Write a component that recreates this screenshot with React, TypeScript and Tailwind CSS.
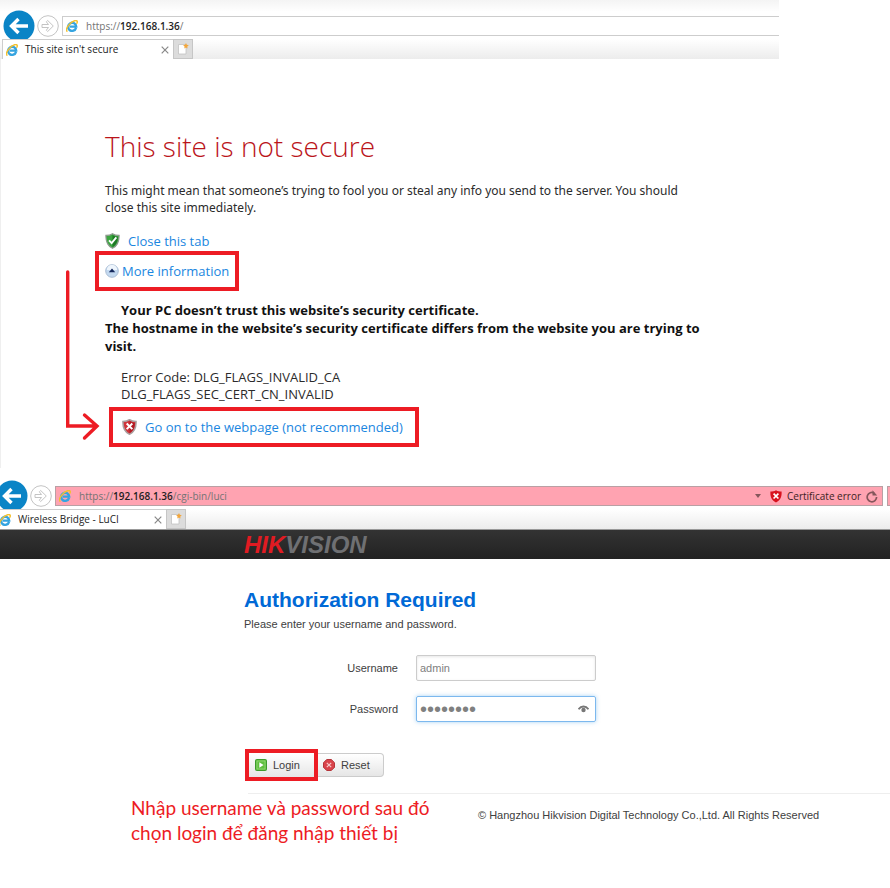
import type { FC, ReactNode } from "react";

interface BrowserBarProps {
  host: string;
  path: string;
  title: string;
  shifted?: boolean;
  insecure?: boolean;
}

const IeIcon: FC = () => (
  <svg viewBox="0 0 16 16" className="size-3 shrink-0" aria-hidden="true">
    <path
      d="M13.4 10.6A5.4 5.4 0 1 1 13.6 8.8H5"
      fill="none"
      stroke="#35a4e0"
      strokeWidth="3.2"
    />
    <path
      d="M1.2 14.8C-1.4 12 5.6 2.6 11.5 1c3.2-.8 4.2.8 3 3.4"
      fill="none"
      stroke="#f3c02f"
      strokeWidth="2"
      strokeLinecap="round"
    />
  </svg>
);

const BackIcon: FC = () => (
  <svg viewBox="0 0 32 32" className="size-8" aria-hidden="true">
    <circle cx="16" cy="16" r="15.5" fill="#0a84c6" />
    <path
      d="M25 16H9M15.5 9 8.5 16l7 7"
      fill="none"
      stroke="#fff"
      strokeWidth="3.4"
    />
  </svg>
);

const ForwardIcon: FC = () => (
  <svg viewBox="0 0 22 22" className="size-[22px]" aria-hidden="true">
    <circle cx="11" cy="11" r="10.3" fill="#fff" stroke="#c4c4c4" />
    <path
      d="M5 9.5h6.5L9.3 6.8l1.4-1.3 5.6 5.5-5.6 5.5-1.4-1.3 2.2-2.7H5z"
      fill="#fff"
      stroke="#bdbdbd"
      strokeWidth="0.9"
    />
  </svg>
);

const NewTabIcon: FC = () => (
  <svg viewBox="0 0 12 12" className="size-3" aria-hidden="true">
    <path d="M1.5 1.5H9V11H1.5z" fill="#fff" stroke="#c2c2c2" strokeWidth="0.8" />
    <path d="m9 0 .8 1.8 2 .5-1.5 1.200.2 2L9 4.400l-1.800 1 .4-2-1.500-1.200 2-.4z" fill="#f3a63a" />
  </svg>
);

const CloseIcon: FC = () => (
  <svg viewBox="0 0 8 8" className="size-2" aria-hidden="true">
    <path d="m.7.7 6.6 6.6M7.3.7.7 7.3" stroke="#888" strokeWidth="1.2" />
  </svg>
);

const SafeShield: FC = () => (
  <svg viewBox="0 0 16 17" className="h-4 w-[15px]" aria-hidden="true">
    <path
      d="M8 .7c2 1.4 4.4 1.9 7 1.9.2 6.5-1.5 11-7 13.7C2.500 13.600.8 9.100 1 2.600c2.600 0 5-.5 7-1.900z"
      fill="#3aa63f"
      stroke="#8f9a90"
      strokeWidth="1.3"
    />
    <path d="M8 2v13c4-2.200 5.500-5.500 5.600-11C11.500 3.900 9.600 3.200 8 2z" fill="#1d7a25" />
    <path d="m4.300 7.800 2.800 3 5-6.200" fill="none" stroke="#fff" strokeWidth="2" />
  </svg>
);

const DangerShield: FC = () => (
  <svg viewBox="0 0 16 17" className="h-4 w-[15px]" aria-hidden="true">
    <path
      d="M8 .7c2 1.4 4.4 1.9 7 1.9.2 6.5-1.5 11-7 13.7C2.500 13.600.8 9.100 1 2.600c2.600 0 5-.5 7-1.900z"
      fill="#d0343a"
      stroke="#a9a0a0"
      strokeWidth="1.6"
    />
    <path d="M8 2v13c4-2.200 5.500-5.500 5.600-11C11.500 3.900 9.600 3.200 8 2z" fill="#b01c24" />
    <path d="m5 4.800 6 6M11 4.800l-6 6" stroke="#fff" strokeWidth="2.1" />
  </svg>
);

const ErrorShield: FC = () => (
  <svg viewBox="0 0 12 13" className="h-[13px] w-3" aria-hidden="true">
    <path
      d="M6 .3c1.600 1 3.500 1.300 5.600 1.300.3 5-.9 8.700-5.600 11C1.300 10.300.1 6.600.4 1.600 2.500 1.600 4.400 1.300 6 .3z"
      fill="#d8121e"
    />
    <path d="m3.600 3.700 4.800 4.800M8.400 3.700 3.600 8.500" stroke="#fff" strokeWidth="1.7" />
  </svg>
);

const CollapseIcon: FC = () => (
  <svg viewBox="0 0 14 14" className="size-[14px]" aria-hidden="true">
    <circle cx="7" cy="7" r="6.3" fill="#c3d9f0" stroke="#a9bdd4" />
    <path d="M1.800 6a5.200 5.200 0 0 1 10.400 0z" fill="#eef5fc" />
    <path d="M3.800 8.200 7 4.600l3.200 3.600z" fill="#14285c" />
  </svg>
);

const RefreshIcon: FC = () => (
  <svg viewBox="0 0 12 13" className="h-[13px] w-3" aria-hidden="true">
    <path d="M8.200 3A4.700 4.700 0 1 0 10.600 7" fill="none" stroke="#85565b" strokeWidth="1.7" />
    <path d="M6.500.2v5.300h4.700z" fill="#85565b" />
  </svg>
);

const BrowserBar: FC<BrowserBarProps> = ({ host, path, title, shifted, insecure }) => (
  <div className={`font-["Open_Sans",sans-serif] text-[10px] ${shifted ? "-ml-[7px]" : ""}`}>
    {/* Address row */}
    <div className="flex h-5 items-center">
      <button type="button" aria-label="Back" className="ml-[3px] size-8 shrink-0">
        <BackIcon />
      </button>
      <button type="button" aria-label="Forward" className="mx-[2px] size-[22px] shrink-0">
        <ForwardIcon />
      </button>
      <div
        className={`ml-px flex h-full flex-1 items-center border pl-[3px] ${
          insecure ? "border-[#b9a0a4] bg-[#ffa3b1]" : "border-r-0 border-[#cdcdcd] bg-white"
        }`}
      >
        <IeIcon />
        <span className="ml-2 flex-1 text-[#747474]">
          https://<span className="font-semibold text-[#1e1e1e]">{host}</span>
          {path}
        </span>
        {insecure && (
          <div className="flex items-center pr-1 text-[#3d1f23]">
            <svg viewBox="0 0 6 4" className="mr-[9px] h-1 w-[6px]" aria-hidden="true">
              <path d="M0 0h6L3 4z" fill="#85565b" />
            </svg>
            <ErrorShield />
            <span className="mx-[5px]">Certificate error</span>
            <RefreshIcon />
          </div>
        )}
      </div>
      {insecure && <div className="ml-1 h-full w-[3px] border border-r-0 border-[#b9a0a4] bg-[#ffa3b1]" />}
    </div>
    {/* Tab row */}
    <div className="relative mt-[3px] flex h-5 bg-linear-to-b from-white to-[#ececec]">
      <div className="ml-[2px] flex w-[171px] items-center border-t border-l border-[#cdcdcd] bg-white pr-1 pl-[3px]">
        <IeIcon />
        <span className="ml-[7px] flex-1 text-[#222]">{title}</span>
        <button type="button" aria-label="Close tab">
          <CloseIcon />
        </button>
      </div>
      <button
        type="button"
        aria-label="New tab"
        className="grid w-5 place-items-center border border-[#c6c6c6] bg-[#dcdcdc]"
      >
        <NewTabIcon />
      </button>
    </div>
  </div>
);

const Highlight: FC<{ className: string; children: ReactNode }> = ({ className, children }) => (
  <div className={`flex w-fit items-center border-4 border-[#ed1c24] ${className}`}>{children}</div>
);

const WarningPage: FC = () => (
  <section className="relative w-7/8 border-l border-[#efefef] pb-[21px]">
    <div className="-ml-px bg-linear-to-b from-[#f4f4f4] to-white to-20% pt-4">
      <BrowserBar host="192.168.1.36" path="/" title="This site isn't secure" />
    </div>
    <div className='pr-[72px] pl-[104px] font-["Open_Sans",sans-serif] text-[13px] leading-[17px] text-[#2b2b2b]'>
      <h1 className="mt-[67px] text-[28px] leading-10 font-light text-[#ba141a]">
        This site is not secure
      </h1>
      <p className='mt-4 font-["Noto_Sans",sans-serif] text-[12px]'>
        This might mean that someone’s trying to fool you or steal any info you send to the server. You should
        close this site immediately.
      </p>
      <a href="#" className="mt-[15px] flex h-5 w-fit items-center text-[#1a86e0]">
        <SafeShield />
        <span className="ml-2">Close this tab</span>
      </a>
      <Highlight className="-ml-[10px] h-10 px-[6px]">
        <a href="#" className="flex items-center text-[#1a86e0]">
          <CollapseIcon />
          <span className="ml-[3px]">More information</span>
        </a>
      </Highlight>
      <p className="mt-[10px] indent-4 leading-[18px] font-bold text-[#111]">
        Your PC doesn’t trust this website’s security certificate.
      </p>
      <p className="leading-[18px] font-bold text-[#111]">
        The hostname in the website’s security certificate differs from the website you are trying to visit.
      </p>
      <p className="mt-[14px] pl-4">
        Error Code: DLG_FLAGS_INVALID_CA
        <br />
        DLG_FLAGS_SEC_CERT_CN_INVALID
      </p>
      <Highlight className="mt-1 ml-1 h-10 pr-3 pl-[9px]">
        <a href="#" className="flex items-center text-[#1a86e0]">
          <DangerShield />
          <span className="ml-2">Go on to the webpage (not recommended)</span>
        </a>
      </Highlight>
    </div>
    {/* Arrow from the first step to the second */}
    <svg
      viewBox="0 0 36 172"
      className="absolute top-[269px] left-[63px] h-[172px] w-9"
      fill="none"
      stroke="#ed1c24"
      strokeWidth="3.4"
      strokeLinecap="round"
      aria-hidden="true"
    >
      <path d="M3.700 3v154H32M20.500 146l12.500 11-12.500 12" />
    </svg>
  </section>
);

const LoginPage: FC = () => (
  <section className='overflow-hidden pt-[18px] font-["Liberation_Sans",sans-serif] text-[11px] text-[#404040]'>
    <BrowserBar
      host="192.168.1.36"
      path="/cgi-bin/luci"
      title="Wireless Bridge - LuCI"
      shifted
      insecure
    />
    <header className="flex h-[30px] items-center border-t border-[#999] bg-linear-to-b from-[#333] to-[#222] pl-[244px] text-[24px] font-bold italic">
      <span className="text-[#e01b22]">HIK</span>
      <span className="text-[#6f7073]">VISION</span>
    </header>
    <form onSubmit={(e) => e.preventDefault()}>
      <div className="pl-[244px]">
        <h2 className="mt-[29px] text-[21px] leading-6 font-bold text-[#0069d6]">Authorization Required</h2>
        <p className="mt-1 leading-4">Please enter your username and password.</p>
      </div>
      <div className="mt-[23px] flex items-center pl-[244px]">
        <label htmlFor="username" className="w-[154px] text-right">
          Username
        </label>
        <input
          id="username"
          type="text"
          defaultValue="admin"
          className="ml-[18px] h-[26px] w-[180px] rounded-xs border border-[#ccc] px-[3px] text-[#808080] shadow-[inset_0_1px_3px_rgba(0,0,0,0.1)]"
        />
      </div>
      <div className="mt-[15px] flex items-center pl-[244px]">
        <label htmlFor="password" className="w-[154px] text-right">
          Password
        </label>
        <div className="relative ml-[18px]">
          <input
            id="password"
            type="password"
            defaultValue="password"
            className="block h-[26px] w-[180px] rounded-xs border border-[#7cb8ee] pr-6 pl-[3px] text-[20px] text-[#808080] shadow-[0_0_4px_rgba(82,168,236,0.5)]"
          />
          <button type="button" aria-label="Show password" className="absolute top-[9px] right-[7px]">
            <svg viewBox="0 0 11 8" className="h-2 w-[11px]" aria-hidden="true">
              <path d="M.6 4.300C3 .7 8 .7 10.400 4.300" fill="none" stroke="#777" strokeWidth="2" />
              <circle cx="5.5" cy="5" r="2.2" fill="#777" />
            </svg>
          </button>
        </div>
      </div>
      <div className="mt-[27px] flex items-center pl-[245px]">
        <Highlight className="h-8">
          <button
            type="submit"
            className="flex h-6 w-[65px] items-center bg-linear-to-b from-white to-[#e6e6e6] pl-[6px]"
          >
            <svg viewBox="0 0 12 12" className="mr-[6px] size-3" aria-hidden="true">
              <rect x=".5" y=".5" width="11" height="11" rx="1" fill="#5fbf3f" stroke="#3c9a2c" />
              <path d="M2 2h8v8H2z" fill="none" stroke="#a8e08e" strokeWidth="0.6" />
              <path d="M4.300 3.200v5.600L8.600 6z" fill="#fff" />
            </svg>
            Login
          </button>
        </Highlight>
        <button
          type="reset"
          className="flex h-6 w-[66px] items-center rounded-r-sm border border-l-0 border-[#ccc] bg-linear-to-b from-white to-[#e6e6e6] pl-[5px]"
        >
          <svg viewBox="0 0 12 12" className="mr-[6px] size-3" aria-hidden="true">
            <path d="M3.700.5h4.600l3.200 3.200v4.600l-3.200 3.200H3.700L.5 8.300V3.700z" fill="#d9444b" stroke="#b5353b" />
            <path d="m3.800 3.800 4.400 4.400M8.200 3.800 3.800 8.200" stroke="#f6c9cb" strokeWidth="1.2" />
          </svg>
          Reset
        </button>
      </div>
    </form>
    <footer className="mt-3">
      <hr className="ml-[248px] border-[#eee]" />
      <div className="flex items-start pl-[131px]">
        <p className="mt-px w-[347px] font-[Lato,'Noto_Sans',sans-serif] text-[19px] leading-[25px] text-[#ed1c24]">
          Nhập username và password sau đó
          <br />
          chọn login để đăng nhập thiết bị
        </p>
        <p className="mt-[13px] leading-4">
          © Hangzhou Hikvision Digital Technology Co.,Ltd. All Rights Reserved
        </p>
      </div>
    </footer>
  </section>
);

export default function App() {
  return (
    <main className="bg-white">
      <WarningPage />
      <LoginPage />
    </main>
  );
}
